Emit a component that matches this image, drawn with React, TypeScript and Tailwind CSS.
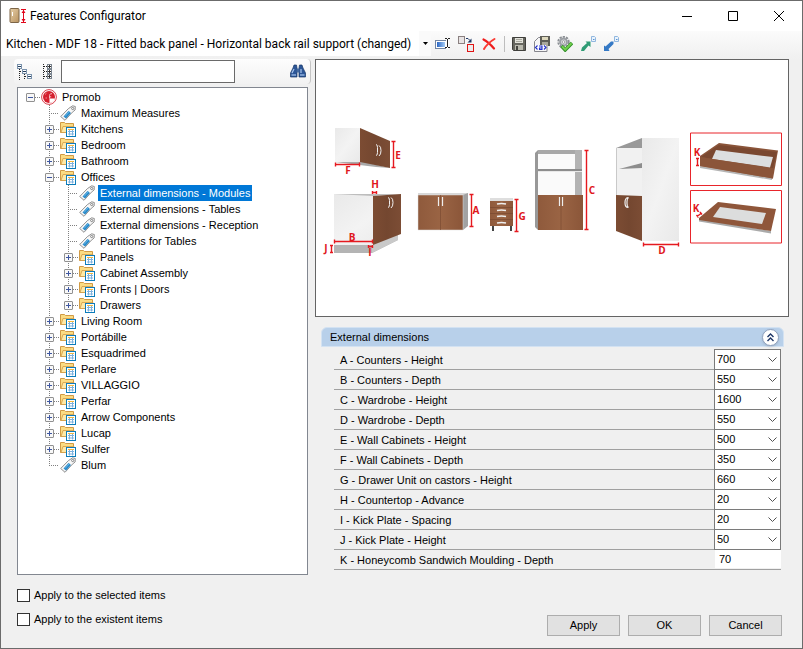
import { Fragment, useState } from "react";
import type { ReactNode } from "react";

type TreeNode = {
  label: string;
  icon: "root" | "folder" | "tag";
  expandable?: boolean;
  children?: TreeNode[];
};

const folder = (label: string): TreeNode => ({ label, icon: "folder", expandable: true });
const tag = (label: string): TreeNode => ({ label, icon: "tag" });

const tree: TreeNode = {
  label: "Promob",
  icon: "root",
  expandable: true,
  children: [
    tag("Maximum Measures"),
    folder("Kitchens"),
    folder("Bedroom"),
    folder("Bathroom"),
    {
      label: "Offices",
      icon: "folder",
      expandable: true,
      children: [
        tag("External dimensions - Modules"),
        tag("External dimensions - Tables"),
        tag("External dimensions - Reception"),
        tag("Partitions for Tables"),
        folder("Panels"),
        folder("Cabinet Assembly"),
        folder("Fronts | Doors"),
        folder("Drawers"),
      ],
    },
    folder("Living Room"),
    folder("Portábille"),
    folder("Esquadrimed"),
    folder("Perlare"),
    folder("VILLAGGIO"),
    folder("Perfar"),
    folder("Arrow Components"),
    folder("Lucap"),
    folder("Sulfer"),
    tag("Blum"),
  ],
};

const dimensions = [
  { label: "A - Counters - Height", value: "700" },
  { label: "B - Counters - Depth", value: "550" },
  { label: "C - Wardrobe - Height", value: "1600" },
  { label: "D - Wardrobe - Depth", value: "550" },
  { label: "E - Wall Cabinets - Height", value: "500" },
  { label: "F - Wall Cabinets - Depth", value: "350" },
  { label: "G - Drawer Unit on castors - Height", value: "660" },
  { label: "H - Countertop - Advance", value: "20" },
  { label: "I - Kick Plate - Spacing", value: "20" },
  { label: "J - Kick Plate - Height", value: "50" },
];

/* ---------- icons ---------- */

function AppIcon() {
  return (
    <svg className="h-4 w-[17px] shrink-0" viewBox="0 0 17 16">
      <defs>
        <linearGradient id="door" x1="0" y1="0" x2="1" y2="1">
          <stop offset="0" stopColor="#e6cfa8" />
          <stop offset="1" stopColor="#b8925f" />
        </linearGradient>
      </defs>
      <rect x="1" y="0.5" width="9" height="14" rx="1" fill="url(#door)" stroke="#7c6547" />
      <path d="M3.5 4v4" stroke="#fff" />
      <path d="M12 1.5h5M12 14.5h5M14.5 2v12" stroke="#e1061b" />
      <path d="M12.500 5l2-3 2 3zM12.500 11l2 3 2-3z" fill="#e1061b" />
    </svg>
  );
}

function RootIcon() {
  return (
    <svg className="h-4 w-4" viewBox="0 0 16 16">
      <circle cx="8" cy="8" r="7.4" fill="#fff" stroke="#d9404d" strokeWidth="1" />
      <circle cx="8" cy="8" r="6" fill="#d5202f" />
      <path d="M8.500 13.700V9.500h5.400A6 6 0 0 1 8.500 13.900z" fill="#fff" />
      <path d="M8.500 9.500V6.300c0-1 .8-1.600 2.500-1.600M8.500 7.800h1.700" fill="none" stroke="#f7c9cd" strokeWidth="0.900" />
      <path d="M4 5.500l1.500-1.300M4.500 9h1.500" stroke="#f3a3aa" strokeWidth="0.8" />
    </svg>
  );
}

function TagIcon() {
  return (
    <svg className="h-4 w-4" viewBox="0 0 16 16">
      <path d="M0.700 11.500L8.500 3.500l4.200-2.700 2.600 0.700-0.200 3.500-2.700 2.200-7.400 8.100z" fill="#f7f7f7" stroke="#858585" strokeWidth="0.900" />
      <path d="M3.500 11.500l5-5.500L11 8l-5 5.500z" fill="#2487c8" />
      <path d="M5 11.500l4.500-5" stroke="#7cc4ee" strokeWidth="0.8" />
      <circle cx="12.700" cy="3.500" r="1.100" fill="#fff" stroke="#777" strokeWidth="0.900" />
    </svg>
  );
}

function FolderIcon() {
  return (
    <svg className="h-4 w-4" viewBox="0 0 16 16">
      <path d="M0.500 11.500V1.500h4l1 1h8v9z" fill="#fbdc83" stroke="#d09a45" />
      <path d="M1 11.500L3 5.500h11l-2 6z" fill="#ffe9a6" stroke="#d09a45" strokeWidth="0.800" />
      <rect x="6.500" y="6.500" width="9" height="9" fill="#fff" stroke="#0c7cba" />
      <path d="M8 8.500h6" stroke="#f0b840" />
      <path d="M9.500 9v5.500M12.500 9v5.500M8 10.500h6M8 13h6" stroke="#7fb2de" />
    </svg>
  );
}

function CollapseTreeIcon() {
  return (
    <svg className="h-4 w-4" viewBox="0 0 16 16" fill="none">
      <path d="M2.500 5v11M7.500 10v6M3 7.500h3M8 12.500h3" stroke="#222" strokeDasharray="1 1" />
      <rect x="0.500" y="0.500" width="4" height="4" fill="#fff" stroke="#7b93ad" />
      <rect x="5.500" y="5.500" width="4" height="4" fill="#fff" stroke="#7b93ad" />
      <rect x="10.500" y="10.500" width="4" height="4" fill="#fff" stroke="#7b93ad" />
      <path d="M1 2.500h3M6 7.500h3M11 12.500h3" stroke="#27415f" />
    </svg>
  );
}

function ExpandTreeIcon() {
  return (
    <svg className="h-4 w-4" viewBox="0 0 16 16" fill="none">
      <path d="M4.500 0v16M5 2.500h3M5 7.500h3M5 12.500h3" stroke="#222" strokeDasharray="1 1" />
      {[0, 5, 10].map((y) => (
        <g key={y}>
          <rect x="8.500" y={y + 0.5} width="4" height="4" fill="#fff" stroke="#7b8590" />
          <path d={`M9 ${y + 2.5}h3M10.500 ${y + 1}v3`} stroke="#333" />
        </g>
      ))}
    </svg>
  );
}

function BinocularsIcon() {
  return (
    <svg className="h-4 w-4" viewBox="0 0 16 16">
      <path d="M3 4l1-3h2.500l0.500 3v9H0.500V9zM13 4l-1-3H9.500L9 4v9h6.500V9z" fill="#2c5697" stroke="#173868" strokeWidth="0.700" />
      <rect x="6.500" y="4.500" width="3" height="4" fill="#42699f" />
      <path d="M2 9l2-4M11 9V5" stroke="#a9c6ee" strokeWidth="1.200" />
      <path d="M1.500 11h4.500M10 11h4.500" stroke="#8eb0de" strokeWidth="1.400" />
    </svg>
  );
}

function RenameIcon() {
  return (
    <svg className="h-4 w-4" viewBox="0 0 16 16" fill="none">
      <defs>
        <linearGradient id="field" x1="0" y1="0" x2="1" y2="0">
          <stop offset="0" stopColor="#2a66c4" />
          <stop offset="1" stopColor="#a5cdf7" />
        </linearGradient>
      </defs>
      <rect x="0.500" y="4.500" width="12" height="8" fill="#fff" stroke="#7386a3" />
      <rect x="2" y="6" width="8" height="5" fill="url(#field)" />
      <path d="M12.500 3v10" stroke="#fff" strokeWidth="3" />
      <path d="M10 2.500h2M13 2.500h2M10 11.500h2M13 11.500h2M12.500 3v8" stroke="#222" />
    </svg>
  );
}

function DuplicateIcon() {
  return (
    <svg className="h-4 w-4" viewBox="0 0 16 16" fill="none">
      <rect x="0.500" y="0.500" width="6" height="7" fill="#e8e4e4" stroke="#8a8080" />
      <path d="M8 2.500h2l2 2" stroke="#1d3764" />
      <path d="M13.500 2.500v4h-4z" fill="#1d3764" />
      <rect x="9.500" y="8.500" width="6" height="7" fill="#ececec" stroke="#e01414" />
    </svg>
  );
}

function DeleteIcon() {
  return (
    <svg className="h-4 w-4" viewBox="0 0 16 16" fill="none" strokeLinecap="round">
      <path d="M2.500 3.500c4 2 7.500 5.500 10.500 9" stroke="#ee1c1c" strokeWidth="2.200" />
      <path d="M13.500 3C10 5 5.500 9 3 13" stroke="#fa3b34" strokeWidth="2" />
    </svg>
  );
}

function SaveIcon() {
  return (
    <svg className="h-4 w-4" viewBox="0 0 16 16">
      <path d="M1.500 1.500h13v13h-12l-1-1z" fill="#66665f" stroke="#3f3f3b" />
      <rect x="4" y="2" width="8" height="5" fill="#e3e3dc" />
      <path d="M5 3.500h6M5 5.500h6" stroke="#a9a99f" />
      <rect x="4" y="9" width="8" height="5" fill="#b9b9ae" />
      <rect x="5" y="10" width="2" height="4" fill="#44443f" />
    </svg>
  );
}

function SaveAsIcon() {
  return (
    <svg className="h-4 w-4" viewBox="0 0 16 16">
      <path d="M0.500 5.500l4-4h8.500v14H0.500z" fill="#f6f6f6" stroke="#85858c" />
      <rect x="6" y="0" width="10" height="10" fill="#5f5f57" />
      <rect x="8" y="1" width="6" height="3" fill="#ddd8bd" />
      <rect x="8" y="6" width="6" height="4" fill="#aaa89a" />
      <rect x="1" y="9" width="11" height="5" fill="#fff" />
      <path d="M3.500 9.500L1.500 11.500l2 2M10 9.500l2 2-2 2M5 10h3v3.500H5.500V12H8" fill="none" stroke="#2330c9" strokeWidth="1.100" />
    </svg>
  );
}

function GearCheckIcon() {
  return (
    <svg className="h-4 w-4" viewBox="0 0 16 16" fill="none">
      <circle cx="6.500" cy="6" r="5.200" stroke="#8b8f94" strokeWidth="2" strokeDasharray="2.200 1.100" />
      <circle cx="6.500" cy="6" r="3.500" fill="#d6d8da" stroke="#9b9fa4" strokeWidth="1.800" />
      <circle cx="6.500" cy="6" r="1.300" fill="#fff" stroke="#777" strokeWidth="0.600" />
      <path d="M4.500 10l3.700 4L15 7" stroke="#2f8f27" strokeWidth="3.400" />
      <path d="M5 10.300l3.200 3.300L14.500 7.300" stroke="#72cf4c" strokeWidth="2" />
    </svg>
  );
}

function ExportIcon() {
  return (
    <svg className="h-4 w-4" viewBox="0 0 16 16">
      <path d="M11.500 0.500h3l1 1v4h-4z" fill="#eaf3fc" stroke="#91b7df" />
      <path d="M13 3.500h1.500" stroke="#5a94d3" />
      <path d="M10.500 5.500H5.500l1.500 1.500-5 4.500-1 3.500h3l4.500-5.500 2 1.500z" fill="#2f9b74" />
    </svg>
  );
}

function ImportIcon() {
  return (
    <svg className="h-4 w-4" viewBox="0 0 16 16">
      <path d="M11.500 0.500h3l1 1v4h-4z" fill="#eaf3fc" stroke="#91b7df" />
      <path d="M13 3.500h1.500" stroke="#5a94d3" />
      <path d="M1 15V9.500l1.500 1L8 5.500h2.500V8L5.500 13l1 2z" fill="#3579c5" />
    </svg>
  );
}

/* ---------- tree ---------- */

type GuideProps = {
  up?: boolean;
  down?: boolean;
  across?: boolean;
};

function Guide({ up, down, across }: GuideProps) {
  return (
    <svg className="block h-4 w-[19px]" viewBox="0 0 19 16" fill="none" stroke="#808080" strokeDasharray="1 1">
      {up && <path d="M9.500 0v8" />}
      {down && <path d="M9.500 8v8" />}
      {across && <path d="M9 8.500h10" />}
    </svg>
  );
}

function Expander({ open, first }: { open: boolean; first?: boolean }) {
  return (
    <svg className="block h-4 w-[19px]" viewBox="0 0 19 16" fill="none">
      {!first && <path d="M9.500 0v16" stroke="#808080" strokeDasharray="1 1" />}
      <path d="M10 8.500h9" stroke="#808080" strokeDasharray="1 1" />
      <rect x="5.500" y="4.500" width="8" height="8" rx="0.500" fill="#f8f8f8" stroke="#919191" />
      <path d="M7 8.500h5" stroke="#3f57a0" />
      {!open && <path d="M9.500 6v5" stroke="#3f57a0" />}
    </svg>
  );
}

const icons = { root: <RootIcon />, folder: <FolderIcon />, tag: <TagIcon /> };

type BranchProps = {
  node: TreeNode;
  rails: boolean[];
  last: boolean;
  selected: string;
  onSelect: (label: string) => void;
};

function Branch({ node, rails, last, selected, onSelect }: BranchProps) {
  const [open, setOpen] = useState(Boolean(node.children));
  const isRoot = node.icon === "root";
  const active = selected === node.label;

  return (
    <li>
      <div className="flex h-4 items-center">
        {rails.map((rail, i) => (
          <Guide key={i} up={rail} down={rail} />
        ))}
        {node.expandable ? (
          <button
            type="button"
            aria-label={`Toggle ${node.label}`}
            onClick={() => setOpen(!open)}
          >
            <Expander open={open} first={isRoot} />
          </button>
        ) : (
          <Guide up down={!last} across />
        )}
        <span className="mr-[3px] pl-px">{icons[node.icon]}</span>
        <button
          type="button"
          onClick={() => onSelect(node.label)}
          className={`h-4 px-[2px] leading-4 whitespace-nowrap ${active ? "bg-[#0078d7] text-white" : ""}`}
        >
          {node.label}
        </button>
      </div>
      {open && node.children && (
        <ul>
          {node.children.map((child, i) => (
            <Branch
              key={child.label}
              node={child}
              rails={[...rails, !isRoot && !last]}
              last={i === node.children!.length - 1}
              selected={selected}
              onSelect={onSelect}
            />
          ))}
        </ul>
      )}
    </li>
  );
}

/* ---------- furniture drawing ---------- */

function Mark({ d, x, y, letter }: { d: string; x: number; y: number; letter: string }) {
  return (
    <Fragment>
      <path d={d} fill="none" stroke="#e5191f" strokeWidth="1.400" />
      <text x={x} y={y} textAnchor="middle" fill="#e0161c" className="font-['Open_Sans',sans-serif] text-[10px] font-bold">
        {letter}
      </text>
    </Fragment>
  );
}

function Preview() {
  return (
    <svg className="block w-full" viewBox="316 60 472 256" role="img" aria-label="External dimensions">
      <defs>
        <linearGradient id="wood" x1="0" y1="0" x2="1" y2="0">
          <stop offset="0" stopColor="#8f5a3c" />
          <stop offset="0.500" stopColor="#9a6444" />
          <stop offset="1" stopColor="#8b5639" />
        </linearGradient>
        <linearGradient id="woodDark" x1="0" y1="0" x2="1" y2="0">
          <stop offset="0" stopColor="#7c4c33" />
          <stop offset="0.500" stopColor="#744730" />
          <stop offset="1" stopColor="#7c4d35" />
        </linearGradient>
        <linearGradient id="panel" x1="0" y1="0" x2="1" y2="1">
          <stop offset="0" stopColor="#e9e9e9" />
          <stop offset="0.500" stopColor="#f3f3f3" />
          <stop offset="1" stopColor="#e9e9e9" />
        </linearGradient>
      </defs>

      {/* wall cabinet */}
      <path d="M335 162l25-1 30 7-14-1z" fill="#a9a9a9" />
      <path d="M335 128h25v34h-25z" fill="url(#panel)" />
      <path d="M360 128l30 13v27l-30-6z" fill="url(#woodDark)" />
      <path d="M376 144.500q1.500 0 1.500 3v5q0 3-1.500 3M379 145.500q2 1 2 5t-2 5.500" fill="none" stroke="#f1f1f1" />
      <Mark d="M393.500 141v27M391.500 141.500h4M391.500 167.500h4" x={398} y={159} letter="E" />
      <Mark d="M335 164.500h25M335.500 162.500v4M359.500 162.500v4" x={348} y={174} letter="F" />

      {/* base cabinet */}
      <path d="M334 245h39l25-10v5l-26 13h-38z" fill="#b4b4b4" />
      <path d="M372 253v-8l26-11v6z" fill="#c9c9c9" />
      <path d="M334 194h67v2l-28 1v48h-39z" fill="url(#panel)" />
      <path d="M334 194h67l-28 2z" fill="#bdbdbd" />
      <path d="M373 196l28-2v40l-28 11z" fill="url(#woodDark)" />
      <path d="M388 197.500q1.500 0 1.500 3v4q0 3-1.500 3M391 197.500q2 1 2 5t-2 5.500" fill="none" stroke="#f1f1f1" />
      <Mark d="M372 192.500h5M372.500 191v3M376.500 191v3" x={375} y={188} letter="H" />
      <Mark d="M334 241.500h39M334.500 239.500v4M372.500 239.500v4" x={352} y={241} letter="B" />
      <Mark d="M331.500 245v8M330 245.500h3M330 252.500h3" x={326} y={252} letter="J" />
      <Mark d="M368 246.500h5M368.500 245v3M372.500 245v3" x={370} y={256} letter="I" />

      {/* counter */}
      <path d="M463 193h5v33l-5 4z" fill="#a2a2a2" />
      <path d="M418 193h50l-5 2h-45z" fill="#d8d8d8" />
      <path d="M418 195h45v35h-45z" fill="url(#wood)" stroke="#ddd" strokeWidth="0.500" />
      <path d="M440.500 195v35" stroke="#75462f" strokeWidth="0.600" />
      <path d="M438.500 197v9M442.500 197v9" stroke="#eee" strokeWidth="1.200" />
      <Mark d="M471.500 194v33M469.500 194.500h4M469.500 226.500h4" x={476} y={214} letter="A" />

      {/* drawer unit */}
      <path d="M490 198h23v3h-23z" fill="#dedede" />
      <path d="M490 201h23v25h-23z" fill="url(#wood)" />
      <path d="M490 207.500h23M490 213.500h23M490 219.500h23" stroke="#74452e" strokeWidth="0.600" />
      <path d="M497 204q4.500-1 9 0M497 210.500q4.500-1 9 0M497 216.500q4.500-1 9 0M497 223q4.500-1 9 0" fill="none" stroke="#eee" strokeWidth="1.500" />
      <path d="M493 226v5M511 226v5" stroke="#444" strokeWidth="2" />
      <Mark d="M516.500 199v33M514.500 199.500h4M514.500 231.500h4" x={522} y={220} letter="G" />

      {/* open wardrobe */}
      <path d="M535 153l3-3v80l-3-3z" fill="#989898" />
      <path d="M538 150h44v46h-44z" fill="#fafafa" />
      <path d="M538 150h44v4h-44z" fill="#a8a8a8" />
      <path d="M575 150h7v46h-7z" fill="#b3b3b3" />
      <path d="M538 169l37-0h7v2h-44z" fill="#8d8d8d" />
      <path d="M538 171.500h44" stroke="#e8e8e8" />
      <path d="M538 195h45v35h-45z" fill="url(#wood)" />
      <path d="M561 195v35" stroke="#75462f" strokeWidth="0.600" />
      <path d="M559.500 197v9M562.500 197v9" stroke="#eee" strokeWidth="1.200" />
      <Mark d="M586.500 150v80M584.500 150.500h4M584.500 229.500h4" x={592} y={194} letter="C" />

      {/* deep wardrobe */}
      <path d="M616 148h26v48h-26z" fill="#f1f1f1" />
      <path d="M616 148l26-10v10z" fill="#999" />
      <path d="M619 169l23-6v5z" fill="#8d8d8d" />
      <path d="M616.500 148v47" stroke="#c9c9c9" />
      <path d="M616 195l26 1v45l-26-10z" fill="url(#woodDark)" />
      <path d="M642 138h37v103h-37z" fill="url(#panel)" />
      <path d="M628.500 197.500q-3.500 0-3.500 5t3 5M628.500 197.500q-1.500 1-1.500 4v2q0 3 1.500 4" fill="none" stroke="#eee" strokeWidth="1.200" />
      <Mark d="M643 244.500h36M643.500 242.500v4M678.500 242.500v4" x={662} y={254} letter="D" />

      {/* mouldings */}
      <path d="M690.500 133h91v52.500h-91zM690.500 190.500h91v52.500h-91z" fill="#fff" stroke="#e8252b" />
      <path d="M700 166l72 12v2l-72-12z" fill="#b5b5b5" />
      <path d="M719 143l59 7.500-5 28-73-12.500v-10z" fill="#8a5439" />
      <path d="M719 145l-18 12 72 11 4-16z" fill="#7a4830" />
      <path d="M716 150l57 7-3 10.500-58-8.500z" fill="#dcdedf" />
      <path d="M700 157l73 11.500v10L700 166z" fill="#8b5539" />
      <Mark d="M697.500 158v8M696 158.500h3M696 165.500h3" x={697} y={156} letter="K" />
      <path d="M699 219l72 12v2.500l-72-12z" fill="#aaa" />
      <path d="M718 202l58 7-5 22-72-11v-2z" fill="#8f563a" />
      <path d="M720 207l46 6-4 11-49-7z" fill="#dcdddd" />
      <Mark d="M697 216.500l4-3M696.500 215l2 2.500M700 212l2 2.500" x={696} y={212} letter="K" />
    </svg>
  );
}

/* ---------- window parts ---------- */

function ToolButton({ label, children }: { label: string; children: ReactNode }) {
  return (
    <button type="button" aria-label={label} className="block shrink-0">
      {children}
    </button>
  );
}

function TitleBar() {
  return (
    <header className="flex h-[30px] items-center bg-white pl-2">
      <AppIcon />
      <h1 className="flex-1 pl-1 font-[Roboto,sans-serif] text-[12px]">Features Configurator</h1>
      <button type="button" aria-label="Minimize" className="flex h-full w-[46px] items-center justify-center">
        <svg className="h-[10px] w-[10px]" viewBox="0 0 10 10" stroke="#000">
          <path d="M0 5.500h10" />
        </svg>
      </button>
      <button type="button" aria-label="Maximize" className="flex h-full w-[46px] items-center justify-center">
        <svg className="h-[10px] w-[10px]" viewBox="0 0 10 10" stroke="#000" fill="none">
          <path d="M0.500 0.500h9v9h-9z" />
        </svg>
      </button>
      <button type="button" aria-label="Close" className="flex h-full w-[46px] items-center justify-center">
        <svg className="h-[10px] w-[10px]" viewBox="0 0 10 10" stroke="#000">
          <path d="M0 0l10 10M10 0L0 10" />
        </svg>
      </button>
    </header>
  );
}

function Toolbar() {
  return (
    <div className="flex h-7 items-start bg-linear-to-b from-[#fbfbfb] to-[#f0f0f0]">
      <div className="relative shrink-0">
        <select
          aria-label="Configuration"
          className="h-[25px] w-[430px] appearance-none bg-white pl-[5px] font-[Roboto,sans-serif] text-[12px] outline-none"
        >
          <option>Kitchen - MDF 18 - Fitted back panel - Horizontal back rail support (changed)</option>
        </select>
        <span className="pointer-events-none absolute inset-y-0 right-0 flex w-3 items-center justify-center bg-[#fafafa]">
          <svg className="h-[3px] w-[5px]" viewBox="0 0 5 3">
            <path d="M0 0h5L2.500 3z" />
          </svg>
        </span>
      </div>
      <div className="flex h-[25px] items-center gap-[7px] pl-1">
        <ToolButton label="Rename"><RenameIcon /></ToolButton>
        <ToolButton label="Duplicate"><DuplicateIcon /></ToolButton>
        <ToolButton label="Delete"><DeleteIcon /></ToolButton>
        <div className="-mr-px h-4 w-px bg-[#bdbdbd]" />
        <ToolButton label="Save"><SaveIcon /></ToolButton>
        <ToolButton label="Save as"><SaveAsIcon /></ToolButton>
        <ToolButton label="Validate"><GearCheckIcon /></ToolButton>
        <ToolButton label="Export"><ExportIcon /></ToolButton>
        <ToolButton label="Import"><ImportIcon /></ToolButton>
      </div>
    </div>
  );
}

function TreePanel() {
  const [selected, setSelected] = useState("External dimensions - Modules");

  return (
    <aside className="flex w-[297px] shrink-0 flex-col">
      <div className="flex h-[25px] items-center gap-[6px] rounded-sm border-r border-[#c4c4c4] bg-linear-to-b from-[#fdfdfd] to-[#f2f2f2] pr-1 pl-[3px]">
        <ToolButton label="Collapse all"><CollapseTreeIcon /></ToolButton>
        <ToolButton label="Expand all"><ExpandTreeIcon /></ToolButton>
        <input
          aria-label="Search"
          className="mr-auto h-[23px] w-[174px] border border-[#6a6a6a] bg-white px-1 outline-none"
        />
        <ToolButton label="Find"><BinocularsIcon /></ToolButton>
      </div>
      <ul className="mt-[3px] mr-[3px] ml-[3px] flex-1 border border-[#828790] bg-white pt-px pl-[3px]">
        <Branch node={tree} rails={[]} last selected={selected} onSelect={setSelected} />
      </ul>
    </aside>
  );
}

function DimensionList() {
  return (
    <section className="mt-[10px] mr-[5px] ml-[6px]">
      <div className="flex h-5 items-center justify-between rounded-t-md border border-[#d3e2f2] bg-[#b8d0ea] pr-1 pl-2">
        <h2>External dimensions</h2>
        <button
          type="button"
          aria-label="Collapse"
          className="flex h-[17px] w-[17px] items-center justify-center rounded-full border border-[#8ea0bd] bg-white shadow-sm"
        >
          <svg className="h-[9px] w-[9px]" viewBox="0 0 9 9" fill="none" stroke="#1d3566" strokeWidth="1.400">
            <path d="M1.500 4L4.500 1l3 3M1.500 8l3-3 3 3" />
          </svg>
        </button>
      </div>
      <div className="mt-[3px] mr-[3px] ml-[13px]">
        {dimensions.map(({ label, value }) => (
          <div key={label} className="flex h-5">
            <label htmlFor={label} className="flex-1 border-b border-[#a0a0a0] pl-[6px] leading-5">
              {label}
            </label>
            <div className="relative -mt-px w-[67px]">
              <select
                id={label}
                className="h-[21px] w-full appearance-none border border-[#7a7a7a] bg-white pb-px pl-[2px] outline-none"
              >
                <option>{value}</option>
              </select>
              <svg className="pointer-events-none absolute top-2 right-1 h-[6px] w-[9px]" viewBox="0 0 9 6" fill="none" stroke="#505050">
                <path d="M0.500 0.500l4 4 4-4" />
              </svg>
            </div>
          </div>
        ))}
        <div className="flex h-5 border-b border-[#a0a0a0]">
          <label htmlFor="moulding" className="flex-1 pl-[6px] leading-5">
            K - Honeycomb Sandwich Moulding - Depth
          </label>
          <input id="moulding" defaultValue="70" className="h-[18px] w-[66px] bg-white pl-1 outline-none" />
        </div>
      </div>
    </section>
  );
}

function Footer() {
  return (
    <footer className="flex items-end justify-between pt-3 pr-5 pb-3 pl-4">
      <div className="flex flex-col gap-2 pb-[9px]">
        {["Apply to the selected items", "Apply to the existent items"].map((text) => (
          <label key={text} className="flex h-4 items-center gap-1">
            <input type="checkbox" className="h-[13px] w-[13px] appearance-none border border-[#333] bg-white checked:bg-[#333]" />
            {text}
          </label>
        ))}
      </div>
      <div className="flex gap-2">
        {["Apply", "OK", "Cancel"].map((text) => (
          <button key={text} type="button" className="h-[21px] w-[73px] border border-[#adadad] bg-[#e1e1e1]">
            {text}
          </button>
        ))}
      </div>
    </footer>
  );
}

export default function App() {
  return (
    <div className="flex min-h-screen flex-col border border-[#6b6b6b] bg-[#f0f0f0] font-['Liberation_Sans',sans-serif] text-[11px] text-black">
      <TitleBar />
      <Toolbar />
      <main className="flex flex-1 gap-1 pr-[13px] pl-[13px]">
        <TreePanel />
        <div className="min-w-0 flex-1">
          <div className="border border-[#646464] bg-white">
            <Preview />
          </div>
          <DimensionList />
        </div>
      </main>
      <Footer />
    </div>
  );
}
